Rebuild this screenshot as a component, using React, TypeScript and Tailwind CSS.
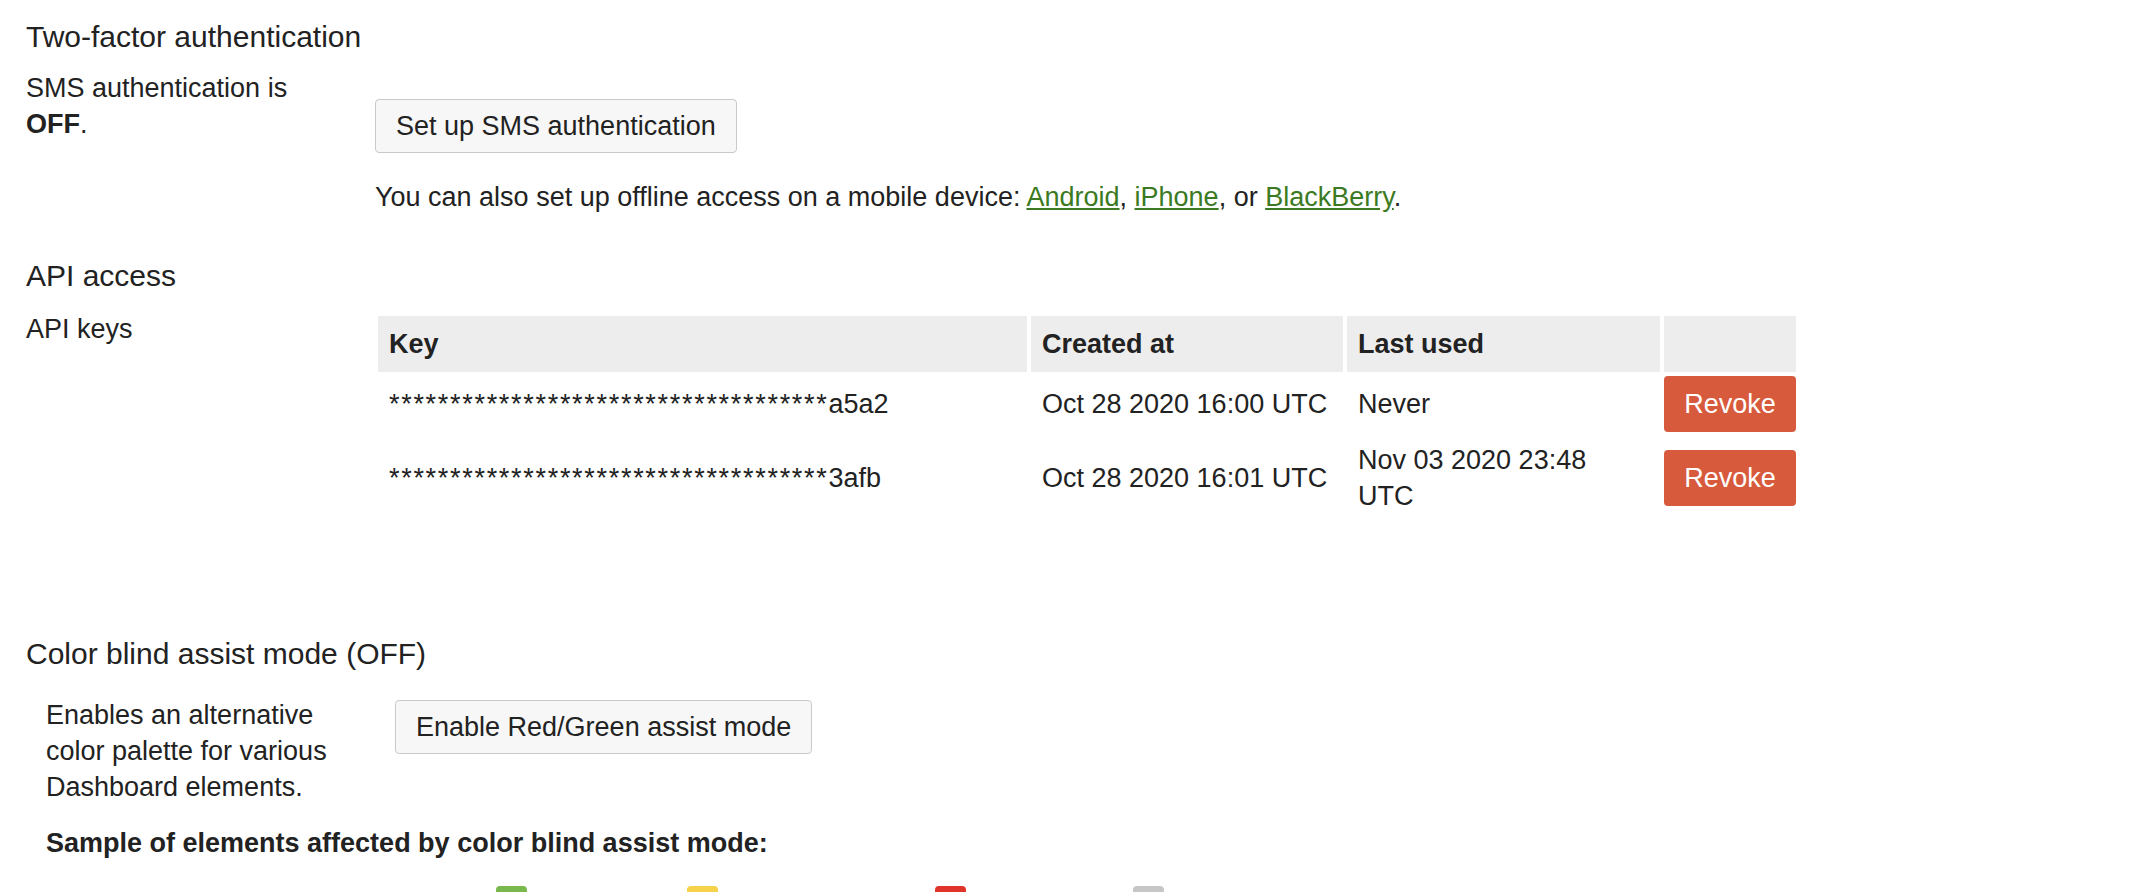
import React from "react";

const stars = "************************************";

function KeyRow({ tail, created, last }: { tail: string; created: string; last: string }) {
  return (
    <tr>
      <td className="px-[11px] py-[6px] align-middle whitespace-nowrap">
        <span className="tracking-[1.7px]">{stars}</span>
        {tail}
      </td>
      <td className="px-[11px] py-[6px] align-middle">{created}</td>
      <td className="pl-[11px] pr-[14px] py-[6px] align-middle">{last}</td>
      <td className="p-0 align-middle">
        <button className="w-[132px] h-[56px] rounded-[4px] bg-[#d85a3d] text-white text-[27px]">Revoke</button>
      </td>
    </tr>
  );
}

export default function App() {
  return (
    <div className="min-h-screen bg-white pl-[26px] pt-[19px] font-['Liberation_Sans',Arial,sans-serif] text-[27px] leading-[36px] text-[#222]">
      <h2 className="text-[30px] leading-[36px]">Two-factor authentication</h2>

      <div className="flex mt-[15px]">
        <div className="w-[349px] shrink-0 pr-[40px]">
          SMS authentication is <b>OFF</b>.
        </div>
        <div>
          <button className="mt-[29px] h-[54px] px-[20px] border border-[#c9c9c9] rounded-[4px] bg-[#f7f7f7] text-[27px] leading-[36px] text-[#222]">
            Set up SMS authentication
          </button>
          <p className="mt-[26px]">
            You can also set up offline access on a mobile device:{" "}
            <a className="text-[#3b7a22] underline" href="#">Android</a>,{" "}
            <a className="text-[#3b7a22] underline" href="#">iPhone</a>, or{" "}
            <a className="text-[#3b7a22] underline" href="#">BlackBerry</a>.
          </p>
        </div>
      </div>

      <h2 className="mt-[43px] text-[30px] leading-[36px]">API access</h2>

      <div className="flex mt-[17px]">
        <div className="w-[348px] shrink-0">API keys</div>
        <table className="mt-[1px] border-separate border-spacing-[4px] table-fixed">
          <colgroup>
            <col className="w-[649px]" />
            <col className="w-[312px]" />
            <col className="w-[313px]" />
            <col className="w-[132px]" />
          </colgroup>
          <thead>
            <tr className="bg-[#ededed]">
              <th className="px-[11px] py-[10px] text-left font-bold">Key</th>
              <th className="px-[11px] py-[10px] text-left font-bold">Created at</th>
              <th className="px-[11px] py-[10px] text-left font-bold">Last used</th>
              <th className="p-0"></th>
            </tr>
          </thead>
          <tbody>
            <KeyRow tail="a5a2" created="Oct 28 2020 16:00 UTC" last="Never" />
            <KeyRow tail="3afb" created="Oct 28 2020 16:01 UTC" last="Nov 03 2020 23:48 UTC" />
          </tbody>
        </table>
      </div>

      <h2 className="mt-[112px] text-[30px] leading-[36px]">Color blind assist mode (OFF)</h2>

      <div className="pl-[20px]">
        <div className="flex mt-[25px]">
          <div className="w-[349px] shrink-0 pr-[40px]">
            Enables an alternative color palette for various Dashboard elements.
          </div>
          <div>
            <button className="mt-[3px] h-[54px] px-[20px] border border-[#c9c9c9] rounded-[4px] bg-[#f7f7f7] text-[27px] leading-[36px] text-[#222]">
              Enable Red/Green assist mode
            </button>
          </div>
        </div>
        <p className="mt-[20px] font-bold">Sample of elements affected by color blind assist mode:</p>
        <div className="flex mt-[25px]">
          <div className="ml-[450px] w-[31px] h-[31px] rounded-[4px] bg-[#7ab84e]"></div>
          <div className="ml-[160px] w-[31px] h-[31px] rounded-[4px] bg-[#f6d24a]"></div>
          <div className="ml-[217px] w-[31px] h-[31px] rounded-[4px] bg-[#e0342a]"></div>
          <div className="ml-[167px] w-[31px] h-[31px] rounded-[4px] bg-[#c6c6c6]"></div>
        </div>
      </div>
    </div>
  );
}
